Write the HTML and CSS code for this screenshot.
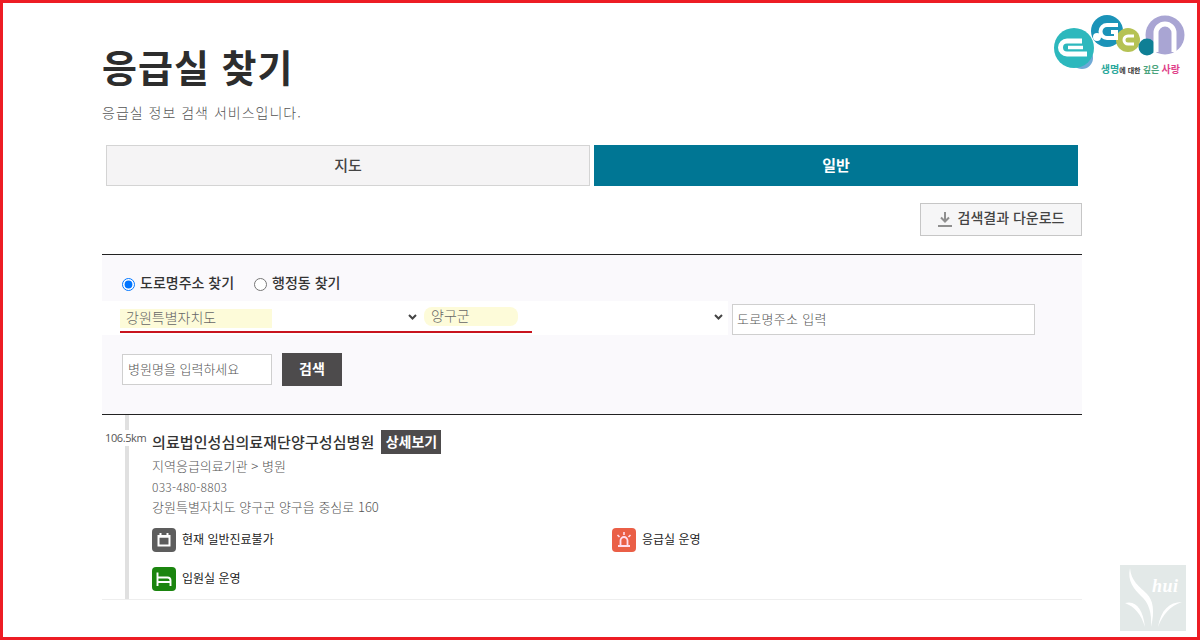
FILE: index.html
```html
<!DOCTYPE html>
<html lang="ko">
<head>
<meta charset="utf-8">
<title>응급실 찾기</title>
<link rel="stylesheet" href="styles.css">
</head>
<body>
<div class="frame">
  <main class="page">
    <h1 class="title">응급실 찾기</h1>
    <p class="subtitle">응급실 정보 검색 서비스입니다.</p>
    <div class="tabs">
      <div class="tab">지도</div>
      <div class="tab tab-active">일반</div>
    </div>
    <div class="download-row">
      <button class="download" type="button">
        <svg class="download-icon" viewBox="0 0 14 15" width="14" height="15"><path d="M7 0v9M3 5.500 7 9.500l4-4" fill="none" stroke="#8f8f8f" stroke-width="2"/><path d="M0 14h14" stroke="#8f8f8f" stroke-width="2"/></svg>
        <span class="btn-label">검색결과 다운로드</span>
      </button>
    </div>
    <section class="search">
      <div class="radios">
        <label class="radio"><input type="radio" name="mode" checked><span class="radio-label">도로명주소 찾기</span></label>
        <label class="radio"><input type="radio" name="mode"><span class="radio-label">행정동 찾기</span></label>
      </div>
      <div class="filters">
        <div class="select select-sido">
          <span class="mark mark-sido">강원특별자치도</span>
          <svg class="chevron" viewBox="0 0 9 6" width="9" height="6"><path d="M1 1 4.500 4.500 8 1" fill="none" stroke="#444" stroke-width="2"/></svg>
        </div>
        <div class="select select-gun">
          <span class="mark mark-gun">양구군</span>
          <svg class="chevron" viewBox="0 0 9 6" width="9" height="6"><path d="M1 1 4.500 4.500 8 1" fill="none" stroke="#444" stroke-width="2"/></svg>
        </div>
        <div class="field field-road">도로명주소 입력</div>
        <span class="redline"></span>
      </div>
      <div class="name-row">
        <div class="field field-name">병원명을 입력하세요</div>
        <button class="search-btn" type="button">검색</button>
      </div>
    </section>
    <section class="result">
      <div class="distance">106.5km</div>
      <div class="rail"></div>
      <div class="info">
        <div class="name-line">
          <strong class="hospital">의료법인성심의료재단양구성심병원</strong>
          <span class="detail">상세보기</span>
        </div>
        <p class="line">지역응급의료기관 &gt; 병원</p>
        <p class="line line-phone">033-480-8803</p>
        <p class="line">강원특별자치도 양구군 양구읍 중심로 160</p>
        <div class="status-grid">
          <div class="status">
            <span class="badge badge-gray"><svg viewBox="0 0 24 24" width="24" height="24"><path d="M6.500 8h11v9.500h-11z" fill="none" stroke="#fff" stroke-width="2"/><path d="M6.500 8.500h11" stroke="#fff" stroke-width="2.500"/><path d="M8.500 5v3M15.500 5v3" stroke="#fff" stroke-width="2"/></svg></span>
            <span class="status-label">현재 일반진료불가</span>
          </div>
          <div class="status">
            <span class="badge badge-red"><svg viewBox="0 0 24 24" width="24" height="24"><path d="M8.500 17v-4.500a3.500 3.500 0 0 1 7 0V17" fill="none" stroke="#fde" stroke-width="1.800"/><path d="M6 18h12" stroke="#fde" stroke-width="2"/><path d="M12 4v3M5.500 7l2 2M18.500 7l-2 2" stroke="#fde" stroke-width="1.600"/></svg></span>
            <span class="status-label">응급실 운영</span>
          </div>
          <div class="status">
            <span class="badge badge-green"><svg viewBox="0 0 24 24" width="24" height="24"><path d="M5.500 5.500V19M5.500 10.500h10a3 3 0 0 1 3 3V19M5.500 15h13" fill="none" stroke="#fff" stroke-width="1.900"/></svg></span>
            <span class="status-label">입원실 운영</span>
          </div>
        </div>
      </div>
    </section>
  </main>

  <div class="logo">
    <svg viewBox="0 0 140 52" width="140" height="52">
      <circle cx="32" cy="48" r="11" fill="#6fa9d6"/>
      <circle cx="115" cy="25" r="19.500" fill="#a9a5d3"/>
      <circle cx="24" cy="38" r="20" fill="#2db8bd"/>
      <circle cx="57" cy="21" r="16" fill="#1b93b8"/>
      <circle cx="78" cy="30" r="12" fill="#b5c254"/>
      <circle cx="97" cy="37" r="8.500" fill="#0f7f95"/>
      <path d="M32 31H17a6.500 6.500 0 0 0 0 13h20" fill="none" stroke="#fff" stroke-width="5"/>
      <path d="M18 37.500h15" stroke="#fff" stroke-width="3.500"/>
      <circle cx="47" cy="27" r="4" fill="#fff"/>
      <path d="M68 15H57a6.500 6.500 0 0 0 0 13h9v-6h-5" fill="none" stroke="#fff" stroke-width="4"/>
      <path d="M84 26h-6a4 4 0 0 0 0 8h6" fill="none" stroke="#fff" stroke-width="3"/>
      <path d="M106 42V23a9 9 0 0 1 18 0v19" fill="none" stroke="#fff" stroke-width="5"/>
    </svg>
    <div class="logo-text"><span class="lt-teal">생명</span><span class="lt-dark">에 대한</span> <span class="lt-green">깊은</span> <span class="lt-pink">사랑</span></div>
  </div>

  <div class="mark-logo">
    <svg viewBox="0 0 66 66" width="66" height="66">
      <rect width="66" height="66" fill="#e3e9e8"/>
      <path d="M10 3c1 13 9 18 17 26 6 6 8 17 4 33 1-14-2-24-10-31C14 24 7 16 10 3z" fill="#fff"/>
      <path d="M5 38c11-3 18 6 20 24-4-13-10-20-20-24zM62 37c-13 0-21 8-24 25 5-13 12-21 24-25z" fill="#fff"/>
      <text x="32" y="27" class="hui">hui</text>
    </svg>
  </div>
</div>
</body>
</html>
```
FILE: styles.css
```css
* { box-sizing: border-box; }
html, body { margin: 0; padding: 0; }
body {
  width: 1200px;
  height: 640px;
  overflow: hidden;
  background: #fff;
  font-family: "Noto Sans CJK KR", "Noto Sans", sans-serif;
  color: #333;
}
.frame {
  position: relative;
  width: 1200px;
  height: 640px;
  border: 3px solid #ed1c24;
  padding: 0 0 0 99px;
}
.page { width: 980px; }
.title {
  margin: 34px 0 0;
  font-size: 38px;
  line-height: 58px;
  font-weight: 700;
  color: #2d2d2d;
  letter-spacing: 1px;
}
.subtitle {
  margin: 7px 0 0;
  font-size: 14px;
  line-height: 20px;
  color: #555;
  letter-spacing: 1px;
  font-weight: 300;
}
.tabs {
  display: grid;
  grid-template-columns: 484px 484px;
  gap: 4px;
  margin: 23px 0 0 4px;
}
.tab {
  height: 41px;
  display: flex;
  align-items: center;
  justify-content: center;
  background: #f5f4f5;
  border: 1px solid #d4d4d4;
  font-size: 15px;
  font-weight: 500;
  color: #444;
  padding-bottom: 3px;
}
.tab-active {
  background: #007694;
  border-color: #007694;
  color: #fff;
  font-weight: 700;
}
.download-row {
  display: flex;
  justify-content: flex-end;
  margin-top: 17px;
}
.download {
  width: 162px;
  height: 33px;
  display: flex;
  align-items: center;
  justify-content: center;
  gap: 6px;
  background: #f6f6f7;
  border: 1px solid #c6c6c6;
  font: 500 14px "Noto Sans CJK KR", sans-serif;
  color: #444;
  padding: 0;
}
.btn-label { position: relative; top: -3px; }
.search {
  height: 161px;
  margin-top: 18px;
  background: #faf9fc;
  border-top: 1px solid #222;
  border-bottom: 1px solid #222;
  padding-top: 18px;
}
.radios {
  display: flex;
  gap: 20px;
  padding-left: 20px;
  height: 20px;
}
.radio {
  display: flex;
  align-items: center;
  gap: 5px;
  font-size: 14px;
  font-weight: 500;
  color: #333;
  line-height: 16px;
}
.radio-label { position: relative; top: -1px; }
.radio input {
  width: 13px;
  height: 13px;
  margin: 3px 0 0;
}
.filters {
  position: relative;
  display: flex;
  margin-top: 8px;
  height: 34px;
}
.select {
  display: flex;
  align-items: flex-start;
  justify-content: space-between;
  background: #fff;
  height: 34px;
  font-size: 14px;
  color: #666;
  font-weight: 300;
}
.select-sido { width: 322px; padding: 8px 7px 0 18px; }
.select-gun { width: 304px; padding: 8px 5px 0 0; }
.chevron { margin-top: 5px; }
.mark {
  display: block;
  background: #fdfbd9;
  height: 19px;
  line-height: 17px;
  padding-left: 6px;
}
.mark-sido { width: 152px; }
.mark-gun { width: 94px; margin-top: -2px; border-radius: 8px; padding-left: 7px; }
.redline {
  position: absolute;
  left: 18px;
  top: 30px;
  width: 412px;
  height: 2px;
  background: #c8141e;
}
.field {
  background: #fff;
  border: 1px solid #cfcfcf;
  font-size: 13px;
  color: #555;
  display: flex;
  align-items: center;
  padding: 0 0 2px 5px;
  font-weight: 300;
}
.field-road { width: 303px; height: 31px; margin-left: 4px; margin-top: 3px; letter-spacing: 0.3px; padding-left: 4px; }
.name-row {
  display: flex;
  align-items: center;
  gap: 10px;
  margin: 18px 0 0 20px;
}
.field-name { width: 150px; height: 31px; }
.search-btn {
  width: 60px;
  height: 33px;
  background: #4d4b4c;
  border: 0;
  color: #fff;
  font: 700 14px "Noto Sans CJK KR", sans-serif;
  padding: 0 0 3px;
}
.result {
  position: relative;
  height: 185px;
  padding-left: 50px;
  border-bottom: 1px solid #eee;
}
.rail {
  position: absolute;
  left: 23px;
  top: 0;
  bottom: 0;
  width: 4px;
  background: #e0e0e0;
}
.distance {
  position: absolute;
  z-index: 1;
  left: 3px;
  top: 15px;
  font-size: 11px;
  line-height: 16px;
  color: #555;
  font-family: "Open Sans", sans-serif;
  letter-spacing: -0.4px;
  background: #fff;
}
.info { padding-top: 15px; }
.name-line {
  display: flex;
  align-items: center;
  gap: 7px;
  height: 24px;
}
.hospital {
  font-size: 15px;
  font-weight: 500;
  color: #333;
  letter-spacing: 0.1px;
  position: relative;
  top: -1px;
}
.detail {
  width: 60px;
  height: 24px;
  background: #4d4b4c;
  color: #fff;
  font-size: 14px;
  font-weight: 700;
  display: flex;
  align-items: center;
  justify-content: center;
  padding-bottom: 2px;
}
.line {
  margin: 0;
  font-size: 13px;
  line-height: 20.500px;
  color: #555;
  font-weight: 300;
}
.line:first-of-type { margin-top: 2px; }
.line-phone { font-size: 12px; letter-spacing: 0.25px; }
.status-grid {
  display: grid;
  grid-template-columns: 460px 300px;
  row-gap: 15px;
  margin-top: 10px;
}
.status {
  display: flex;
  align-items: center;
  gap: 6px;
  font-size: 12px;
  color: #222;
  height: 24px;
}
.status-label { position: relative; top: -1px; }
.badge {
  width: 24px;
  height: 24px;
  border-radius: 4px;
  display: block;
}
.badge svg { display: block; }
.badge-gray { background: #5d5d5d; }
.badge-red { background: #ea5f47; }
.badge-green { background: #1b850f; }
.logo {
  position: absolute;
  left: 1047px;
  top: 7px;
  width: 140px;
}
.logo svg { display: block; overflow: visible; }
.logo-text {
  position: relative;
  margin-top: 0;
  text-align: right;
  padding-right: 10px;
  font-size: 8px;
  line-height: 14px;
  white-space: nowrap;
  font-weight: 700;
  font-family: "Noto Sans CJK KR", sans-serif;
}
.lt-teal { color: #2aa89c; font-size: 10px; }
.lt-dark { color: #333; font-size: 7px; }
.lt-green { color: #4aa37c; font-size: 9px; }
.lt-pink { color: #e0418a; font-size: 10px; }
.mark-logo {
  position: absolute;
  left: 1117px;
  top: 562px;
  width: 66px;
  height: 66px;
}
.mark-logo svg { display: block; }
.hui {
  font-family: "Liberation Serif", serif;
  font-style: italic;
  font-weight: 700;
  font-size: 18px;
  letter-spacing: 0.5px;
  fill: #fff;
}
```
